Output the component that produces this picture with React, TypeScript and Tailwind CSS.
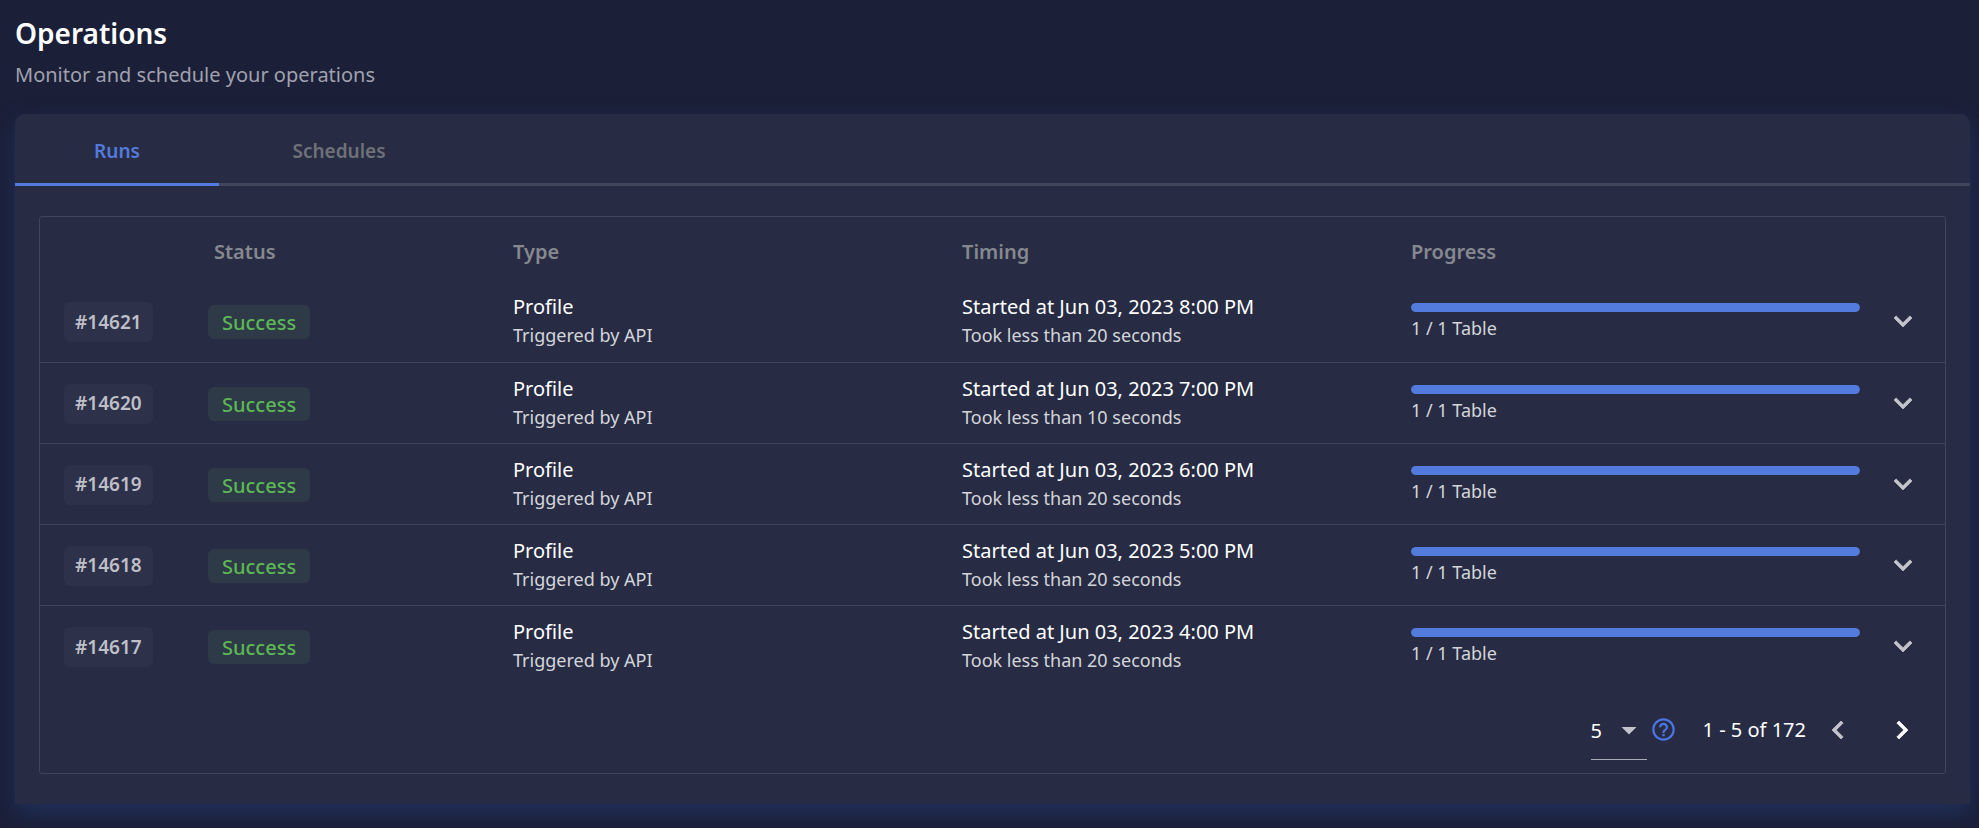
import { useState } from "react";
import { MdArrowDropDown, MdHelpOutline } from "react-icons/md";

type Run = { id: string; time: string; seconds: number; done: number; total: number };

const runs: Run[] = [
  { id: "14621", time: "8:00 PM", seconds: 20, done: 1, total: 1 },
  { id: "14620", time: "7:00 PM", seconds: 10, done: 1, total: 1 },
  { id: "14619", time: "6:00 PM", seconds: 20, done: 1, total: 1 },
  { id: "14618", time: "5:00 PM", seconds: 20, done: 1, total: 1 },
  { id: "14617", time: "4:00 PM", seconds: 20, done: 1, total: 1 },
];

const chevrons = {
  down: "M16.59 8.59 12 13.17 7.41 8.59 6 10l6 6 6-6z",
  left: "M15.41 7.41 14 6l-6 6 6 6 1.41-1.41L10.83 12z",
  right: "M10 6 8.59 7.41 13.17 12l-4.58 4.59L10 18l6-6z",
};

function Chevron({ direction }: { direction: keyof typeof chevrons }) {
  return (
    <svg viewBox="0 0 24 24" className="size-9 fill-current stroke-current stroke-[0.5px]" aria-hidden="true">
      <path d={chevrons[direction]} />
    </svg>
  );
}

function RunRow({ run }: { run: Run }) {
  return (
    <tr className="h-[81px] border-b border-[#41455a] last:border-b-0">
      <td className="pt-0.5 pl-6">
        <span className="inline-flex h-10 items-center rounded-md bg-[#2d3149] px-[11px] text-[19px] font-semibold text-[#bebfc7]">
          #{run.id}
        </span>
      </td>
      <td className="pt-0.5">
        <span className="inline-flex h-[34px] items-center rounded-md bg-[#2e3a47] px-[14px] pt-0.5 text-[20px] font-medium text-[#5cb855]">
          Success
        </span>
      </td>
      <td>
        <div className="text-[20px] leading-7 text-white">Profile</div>
        <div className="text-[18px] leading-7 text-[#d4d5da]">Triggered by API</div>
      </td>
      <td>
        <div className="text-[20px] leading-7 text-white">Started at Jun 03, 2023 {run.time}</div>
        <div className="text-[18px] leading-7 text-[#d4d5da]">
          Took less than {run.seconds} seconds
        </div>
      </td>
      <td className="pt-[22px] align-top">
        <div className="h-[9px] overflow-hidden rounded-full bg-[#3a4468]">
          <div
            className="h-full rounded-full bg-[#537bdd]"
            style={{ width: `${(run.done / run.total) * 100}%` }}
          />
        </div>
        <div className="mt-1 text-[18px] leading-6 text-[#d4d5da]">
          {run.done} / {run.total} Table
        </div>
      </td>
      <td>
        <button
          type="button"
          aria-label={`Expand run ${run.id}`}
          className="mx-auto flex size-9 items-center justify-center text-[#c3c4cb]"
        >
          <Chevron direction="down" />
        </button>
      </td>
    </tr>
  );
}

export default function App() {
  const [pageSize, setPageSize] = useState("5");

  return (
    <main className="min-h-screen bg-[#1b1f38] pt-3 pr-[9px] pb-6 pl-[15px] font-['Noto_Sans','Open_Sans',sans-serif]">
      <header>
        <h1 className="text-[28px] leading-[42px] font-semibold text-white">Operations</h1>
        <p className="text-[20px] leading-[42px] text-[#a0a2ae]">Monitor and schedule your operations</p>
      </header>

      <section className="mt-[18px] rounded-t-[10px] bg-[#272c44] pb-[30px] shadow-[0_9px_22px_#20305a]">
        <nav className="flex h-[72px] border-b-3 border-[#41455a] text-[19px] font-semibold" role="tablist">
          <button
            type="button"
            role="tab"
            aria-selected="true"
            className="-mb-[3px] w-[204px] border-b-3 border-[#537bdd] pt-1.5 text-[#537bdd]"
          >
            Runs
          </button>
          <button
            type="button"
            role="tab"
            aria-selected="false"
            className="-mb-[3px] w-[240px] border-b-3 border-transparent pt-1.5 text-[#6f7178]"
          >
            Schedules
          </button>
        </nav>

        <div className="mx-6 mt-[30px] rounded-[3px] border border-[#41455a]">
          <table className="w-full table-fixed border-collapse text-left">
            <colgroup>
              <col className="w-[168px]" />
              <col className="w-[305px]" />
              <col />
              <col />
              <col />
              <col className="w-[85px]" />
            </colgroup>
            <thead>
              <tr className="h-16 text-[20px] text-[#86888f]">
                <td />
                <th className="pt-1.5 pl-[6px] font-semibold">Status</th>
                <th className="pt-1.5 font-semibold">Type</th>
                <th className="pt-1.5 font-semibold">Timing</th>
                <th className="pt-1.5 font-semibold">Progress</th>
                <td />
              </tr>
            </thead>
            <tbody>
              {runs.map((run) => (
                <RunRow key={run.id} run={run} />
              ))}
            </tbody>
          </table>

          <div className="flex h-[87px] items-center justify-end pr-[25px] text-[20px] text-white">
            <div className="relative h-[60px] w-14 border-b border-[#a9abb4]">
              <select
                aria-label="Rows per page"
                value={pageSize}
                onChange={(event) => setPageSize(event.target.value)}
                className="h-full w-full appearance-none bg-transparent pt-1"
              >
                <option>5</option>
                <option>10</option>
                <option>25</option>
              </select>
              <MdArrowDropDown className="pointer-events-none absolute top-3 right-0 size-9 text-[#c3c4cb]" />
            </div>
            <button type="button" aria-label="Help" className="ml-[3px] text-[#4b75e6]">
              <MdHelpOutline className="size-[27px]" />
            </button>
            <span className="ml-[26px]">1 - 5 of 172</span>
            <button type="button" aria-label="Previous page" className="ml-[14px] text-[#c3c4cb]">
              <Chevron direction="left" />
            </button>
            <button type="button" aria-label="Next page" className="ml-7 text-white">
              <Chevron direction="right" />
            </button>
          </div>
        </div>
      </section>
    </main>
  );
}
